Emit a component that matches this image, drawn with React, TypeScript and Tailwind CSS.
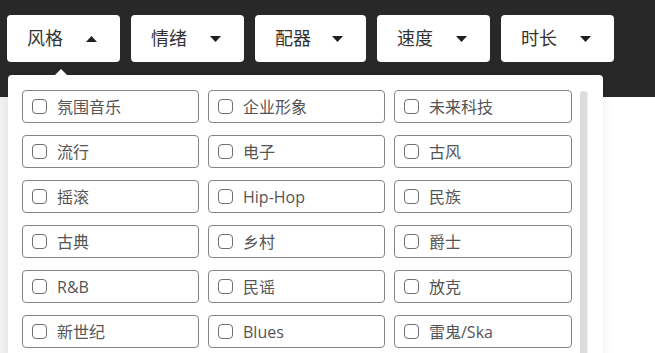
import React from 'react';

const tabs = [
  { label: '风格', open: true, w: 'w-[113px]' },
  { label: '情绪', open: false, w: 'w-[113px]' },
  { label: '配器', open: false, w: 'w-[111px]' },
  { label: '速度', open: false, w: 'w-[113px]' },
  { label: '时长', open: false, w: 'w-[113px]' },
];

const styles = [
  '氛围音乐', '企业形象', '未来科技',
  '流行', '电子', '古风',
  '摇滚', 'Hip-Hop', '民族',
  '古典', '乡村', '爵士',
  'R&B', '民谣', '放克',
  '新世纪', 'Blues', '雷鬼/Ska',
];

const font = { fontFamily: '"Open Sans", "Noto Sans CJK SC", sans-serif' };

function Caret({ up }: { up: boolean }) {
  return (
    <svg width="11" height="6" viewBox="0 0 11 6" className="shrink-0">
      {up ? <path d="M0 6 L5.5 0 L11 6 Z" fill="#1f1f1f" /> : <path d="M0 0 L5.5 6 L11 0 Z" fill="#1f1f1f" />}
    </svg>
  );
}

export default function App() {
  return (
    <div className="relative w-[655px] h-[353px] overflow-hidden bg-white" style={font}>
      <div className="h-[97px] bg-[#282828] flex items-start gap-[11px] pl-[7px] pt-[15px]">
        {tabs.map((t) => (
          <button
            key={t.label}
            className={`${t.w} h-[47px] rounded-[4px] bg-white flex items-center justify-between pl-[20px] pr-[23px] text-[18px] text-[#333]`}
          >
            <span>{t.label}</span>
            <Caret up={t.open} />
          </button>
        ))}
      </div>
      <div className="h-[256px] bg-gradient-to-r from-[#f1f1f1] via-white to-white" />

      <div className="absolute left-[8px] top-[75px] w-[595px] h-[300px] rounded-[4px] bg-white shadow-[0_0_10px_rgba(0,0,0,0.08)]">
        <div className="absolute left-[47px] -top-[6px] w-0 h-0 border-l-[6px] border-r-[6px] border-b-[6px] border-l-transparent border-r-transparent border-b-white" />
        <div className="pl-[14px] pt-[15px] grid grid-cols-[177px_177px_178px] gap-x-[9px] gap-y-[12px]">
          {styles.map((s) => (
            <label
              key={s}
              className="h-[33px] rounded-[4px] border border-[#858585] flex items-center pl-[9px] text-[16px] text-[#555]"
            >
              <span className="w-[15px] h-[15px] rounded-[4px] border border-[#707070] bg-white shrink-0" />
              <span className="ml-[10px]">{s}</span>
            </label>
          ))}
        </div>
        <div className="absolute left-[572px] top-[16px] w-[7px] h-[290px] rounded-full bg-[#dcdcdc]" />
        <div className="absolute left-[579px] top-[16px] w-px h-[290px] bg-[#f0f0f0]" />
      </div>
    </div>
  );
}
